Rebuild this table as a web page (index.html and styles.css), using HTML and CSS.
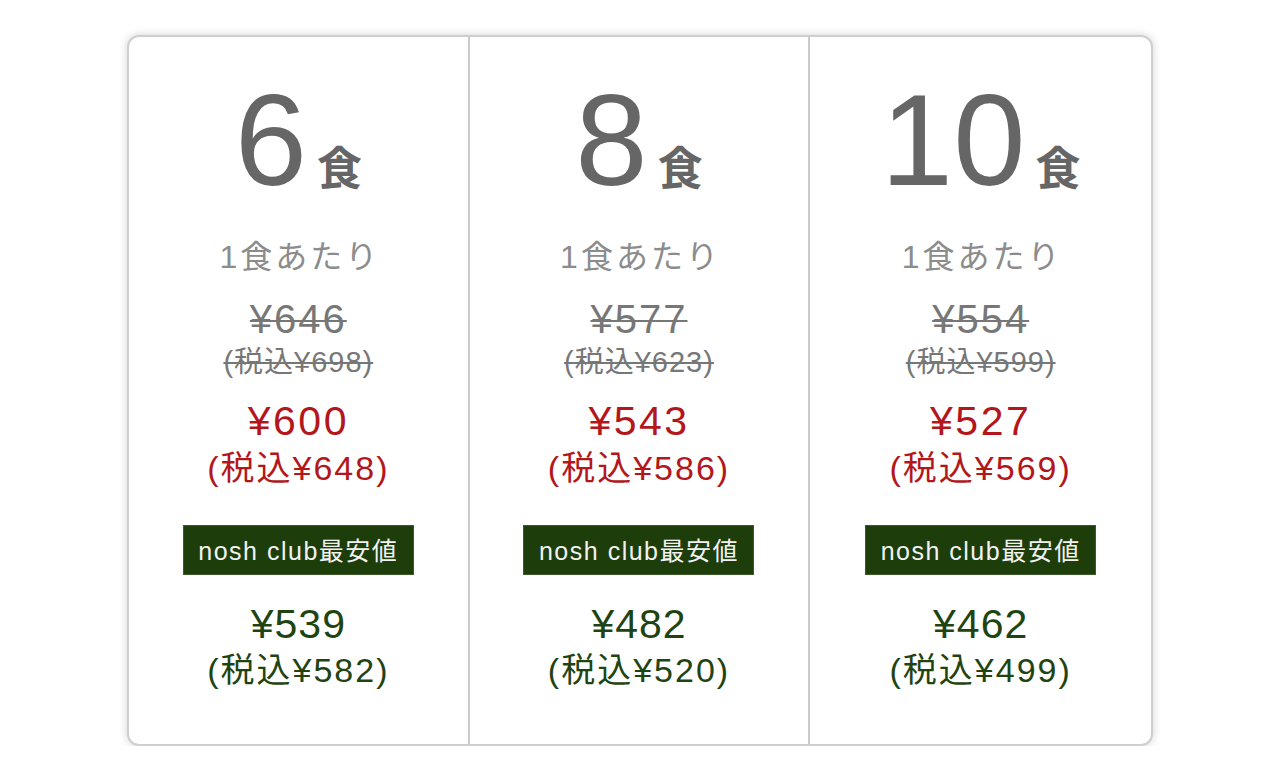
FILE: index.html
```html
<!DOCTYPE html>
<html lang="ja">
<head>
<meta charset="utf-8">
<title>nosh プラン比較</title>
<link rel="stylesheet" href="styles.css">
</head>
<body>
<div class="card">
  <div class="plan">
    <div class="count"><span class="num">6</span><span class="unit">食</span></div>
    <div class="per">1食あたり</div>
    <div class="old">¥646</div>
    <div class="old-tax">(税込¥698)</div>
    <div class="sale">¥600</div>
    <div class="sale-tax">(税込¥648)</div>
    <div class="badge">nosh club最安値</div>
    <div class="club">¥539</div>
    <div class="club-tax">(税込¥582)</div>
  </div>
  <div class="plan">
    <div class="count"><span class="num">8</span><span class="unit">食</span></div>
    <div class="per">1食あたり</div>
    <div class="old">¥577</div>
    <div class="old-tax">(税込¥623)</div>
    <div class="sale">¥543</div>
    <div class="sale-tax">(税込¥586)</div>
    <div class="badge">nosh club最安値</div>
    <div class="club">¥482</div>
    <div class="club-tax">(税込¥520)</div>
  </div>
  <div class="plan">
    <div class="count"><span class="num">10</span><span class="unit">食</span></div>
    <div class="per">1食あたり</div>
    <div class="old">¥554</div>
    <div class="old-tax">(税込¥599)</div>
    <div class="sale">¥527</div>
    <div class="sale-tax">(税込¥569)</div>
    <div class="badge">nosh club最安値</div>
    <div class="club">¥462</div>
    <div class="club-tax">(税込¥499)</div>
  </div>
</div>
</body>
</html>
```

FILE: styles.css
```css
* { box-sizing: border-box; }

html, body {
  margin: 0;
  padding: 0;
  background: #ffffff;
}

body {
  padding-top: 35px;
  font-family: "Liberation Sans", "Noto Sans CJK JP", sans-serif;
}

.card {
  width: 1026px;
  height: 711px;
  margin: 0 auto;
  background: #ffffff;
  border: 2px solid #cfcfcf;
  border-radius: 12px;
  box-shadow: 0 0 8px rgba(0, 0, 0, 0.18);
  display: grid;
  grid-template-columns: repeat(3, 1fr);
  overflow: hidden;
}

.plan {
  display: flex;
  flex-direction: column;
  align-items: center;
  text-align: center;
  padding-top: 38px;
}

.plan:not(:last-child) {
  border-right: 2px solid #cbcbcb;
}

.count {
  height: 130px;
  line-height: 130px;
  color: #666666;
  white-space: nowrap;
}

.num {
  font-size: 130px;
}

.unit {
  font-family: "Noto Sans CJK JP", sans-serif;
  font-size: 45px;
  font-weight: 700;
  line-height: 1;
  margin-left: 10px;
}

.per {
  margin-top: 32px;
  font-size: 32px;
  line-height: 40px;
  letter-spacing: 3px;
  padding-left: 3px;
  color: #8c8c8c;
}

.old {
  margin-top: 20px;
  font-size: 40px;
  line-height: 44px;
  letter-spacing: 2px;
  color: #777777;
  text-decoration: line-through;
  text-decoration-thickness: 2px;
}

.old-tax {
  margin-top: 4px;
  font-size: 29px;
  line-height: 34px;
  letter-spacing: 1px;
  color: #777777;
  text-decoration: line-through;
  text-decoration-thickness: 2px;
}

.sale {
  margin-top: 20px;
  font-size: 41px;
  line-height: 44px;
  letter-spacing: 2.5px;
  color: #b3171c;
}

.sale-tax {
  margin-top: 6px;
  font-size: 34px;
  line-height: 38px;
  letter-spacing: 2px;
  color: #b3171c;
}

.badge {
  margin-top: 38px;
  width: 231px;
  height: 50px;
  line-height: 50px;
  background: #1d3d0b;
  border: 1px solid #3e5a2c;
  color: #f2f2f2;
  font-size: 25px;
  letter-spacing: 1.5px;
  white-space: nowrap;
}

.club {
  margin-top: 27px;
  font-size: 41px;
  line-height: 44px;
  letter-spacing: 1px;
  color: #1f4411;
}

.club-tax {
  margin-top: 5px;
  font-size: 34px;
  line-height: 38px;
  letter-spacing: 2px;
  color: #1f4411;
}
```
